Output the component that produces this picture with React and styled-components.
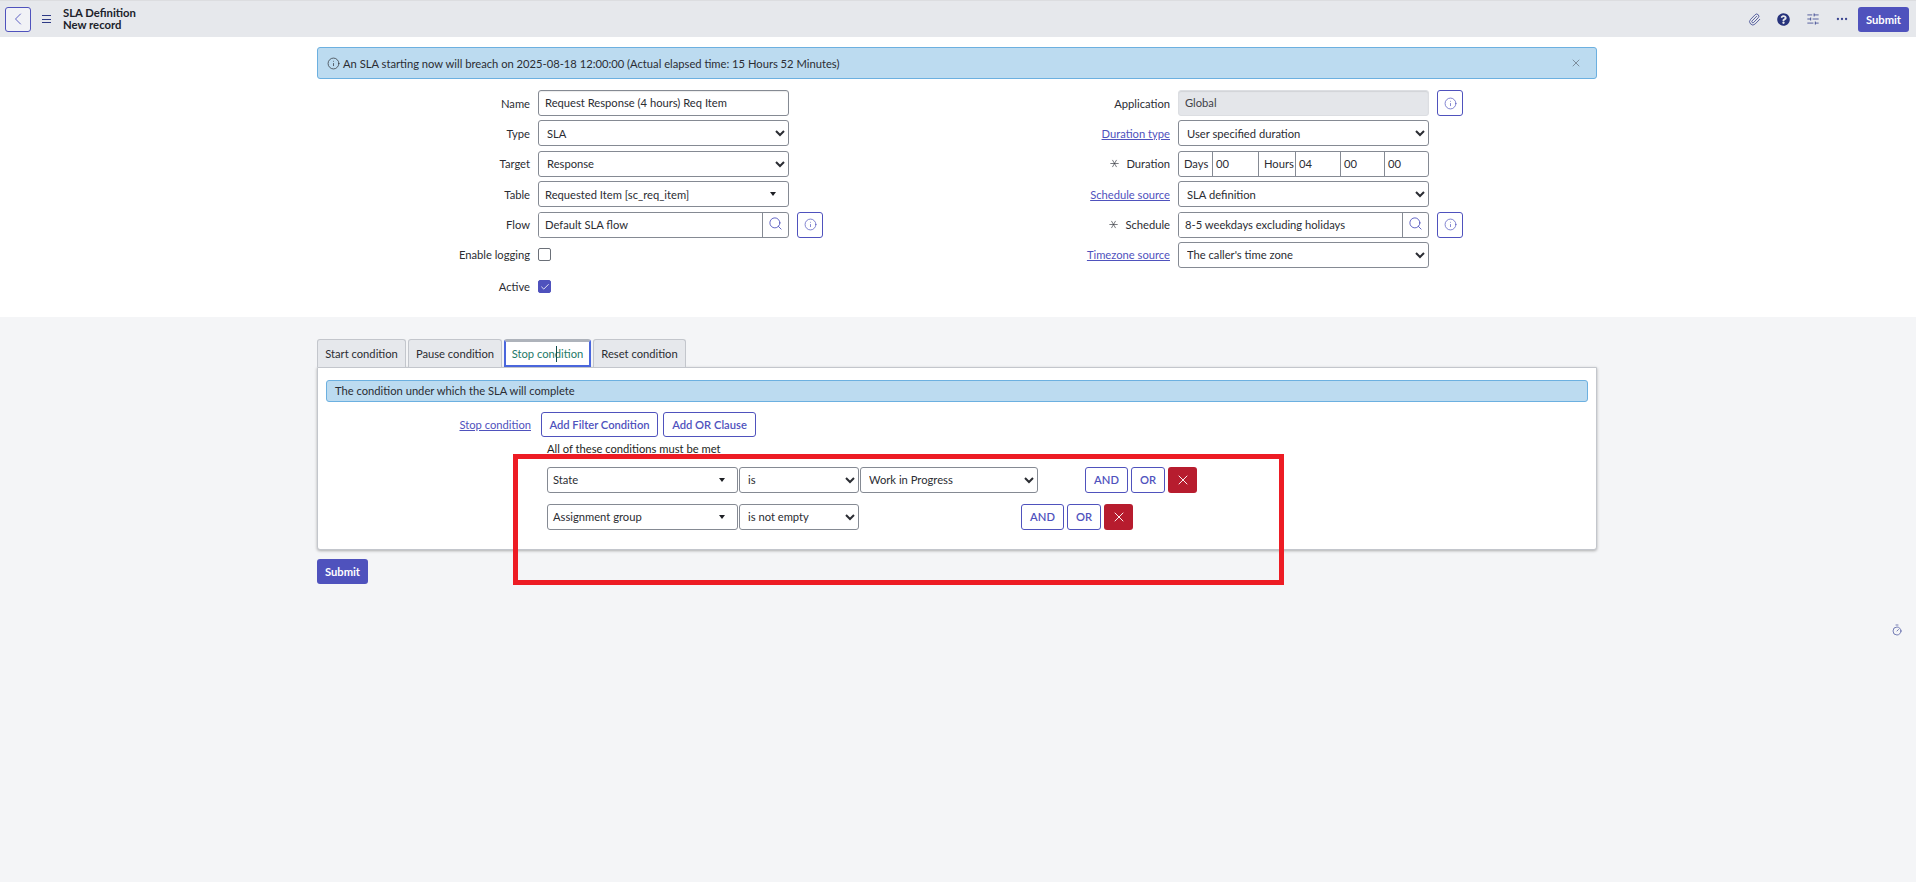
import React from 'react'
import styled, { createGlobalStyle } from 'styled-components'
import { ChevronLeft, Paperclip, SlidersHorizontal, Ellipsis, Info, Search, X, Check, Asterisk, Timer } from 'lucide-react'
import { FaQuestionCircle } from 'react-icons/fa'

const ACCENT = '#4f52bd'
const BORDER = '#858a93'
const TEXT = '#2b2d33'

const GlobalStyle = createGlobalStyle`
  html, body {
    margin: 0;
    background: #f4f5f7;
  }
  body {
    font-family: Lato, "Noto Sans", sans-serif;
    font-size: 11.2px;
    color: ${TEXT};
  }
  * {
    box-sizing: border-box;
  }
`

const Page = styled.div`
  position: relative;
  min-height: 882px;
`

const Header = styled.header`
  height: 37px;
  background: #e6e8ec;
  border-top: 1px solid #dcdde0;
  display: flex;
  align-items: center;
  padding: 0 7px 0 5px;
`

const BackButton = styled.button`
  width: 26px;
  height: 25px;
  padding: 0;
  background: #f1f2f6;
  border: 1px solid ${ACCENT};
  border-radius: 3px;
  color: ${ACCENT};
  display: flex;
  align-items: center;
  justify-content: center;
`

const Hamburger = styled.div`
  width: 9px;
  height: 8px;
  margin-left: 11px;
  border-top: 1px solid #2e3a86;
  border-bottom: 1px solid #2e3a86;
  display: flex;
  align-items: center;
  &::before {
    content: '';
    flex: 1;
    height: 1px;
    background: #2e3a86;
  }
`

const TitleBlock = styled.div`
  margin-left: 12px;
  font-size: 11.3px;
  line-height: 12px;
  font-weight: 700;
  color: #20222a;
`

const HeaderTools = styled.div`
  margin-left: auto;
  display: flex;
  align-items: center;
  color: #3a4590;
`

const ToolSlot = styled.span`
  width: 29px;
  display: flex;
  justify-content: center;
`

const SubmitButton = styled.button`
  width: 51px;
  height: 25px;
  padding: 0;
  margin-left: ${(p) => p.$gap || 0}px;
  margin-top: ${(p) => p.$top || 0}px;
  background: ${ACCENT};
  border: none;
  border-radius: 3px;
  color: #fff;
  font: 700 11.2px Lato, sans-serif;
`

const TopSection = styled.section`
  background: #fff;
  padding: 10px 319px 18.6px 317px;
`

const Alert = styled.div`
  height: 32px;
  background: #bcdbf0;
  border: 1px solid #6cb0e0;
  border-radius: 3px;
  display: flex;
  align-items: center;
  padding: 0 14px 0 9px;
  gap: 3px;
`

const AlertClose = styled.span`
  margin-left: auto;
  display: flex;
  color: #5b6470;
`

const FormGrid = styled.div`
  display: grid;
  grid-template-columns: 640px 640px;
  margin-top: 11px;
`

const FormColumn = styled.div`
  display: grid;
  grid-auto-rows: 26px;
  row-gap: 4.4px;
`

const FieldRow = styled.div`
  display: grid;
  grid-template-columns: 213px 251px 26px;
  column-gap: 8px;
  align-items: center;
  margin-top: ${(p) => p.$top || 0}px;
`

const FieldLabel = styled.label`
  text-align: right;
  display: flex;
  justify-content: flex-end;
  align-items: center;
  gap: 5px;
  color: ${TEXT};
`

const FieldLink = styled.a`
  color: ${ACCENT};
  text-decoration: underline;
`

const Mandatory = styled.span`
  display: flex;
  transform: rotate(90deg);
  color: #3a3d45;
  margin-right: -1px;
`

const TextInput = styled.input`
  width: 100%;
  height: 100%;
  padding: 0 6px 1px;
  font: 11.2px Lato, sans-serif;
  color: ${(p) => (p.disabled ? '#3f4248' : TEXT)};
  background: ${(p) => (p.disabled ? '#e4e6ea' : '#fff')};
  border: 1px solid ${(p) => (p.disabled ? '#dcdee2' : BORDER)};
  border-radius: 3px;
  box-shadow: inset 0 1px 1px rgba(0, 0, 0, 0.08);
  outline: none;
`

const NativeSelect = styled.select`
  width: ${(p) => (p.$width ? `${p.$width}px` : '100%')};
  height: ${(p) => (p.$width ? '26px' : '100%')};
  padding: 0 0 0 4px;
  font: 11.2px Lato, sans-serif;
  color: ${TEXT};
  background-color: #fff;
  border: 1px solid ${BORDER};
  border-radius: 3px;
  outline: none;
`

const ComboBox = styled.div`
  width: ${(p) => (p.$width ? `${p.$width}px` : '100%')};
  height: ${(p) => (p.$width ? '26px' : '100%')};
  padding: 0 12px 0 ${(p) => (p.$width ? 5 : 6)}px;
  background: #fff;
  border: 1px solid ${BORDER};
  border-radius: 3px;
  display: flex;
  align-items: center;
  justify-content: space-between;
`

const ComboCaret = styled.span`
  width: 0;
  height: 0;
  border-left: 3.5px solid transparent;
  border-right: 3.5px solid transparent;
  border-top: 4px solid #1d1f24;
`

const LookupGroup = styled.div`
  height: 100%;
  display: flex;
  border: 1px solid ${BORDER};
  border-radius: 3px;
  overflow: hidden;
  background: #fff;
  align-items: center;
`

const LookupInput = styled.input`
  flex: 1;
  min-width: 0;
  height: 100%;
  padding: 0 6px;
  border: none;
  border-right: 1px solid ${BORDER};
  font: 11.2px Lato, sans-serif;
  color: ${TEXT};
  outline: none;
`

const LookupIcon = styled.span`
  width: 25px;
  display: flex;
  justify-content: center;
  color: ${ACCENT};
  margin-top: -2px;
`

const IconButton = styled.button`
  width: 26px;
  height: 100%;
  padding: 0;
  background: #fff;
  border: 1px solid ${ACCENT};
  border-radius: 3px;
  color: ${ACCENT};
  display: flex;
  align-items: center;
  justify-content: center;
`

const Checkbox = styled.span`
  width: 13px;
  height: 13px;
  border-radius: 2px;
  border: 1px solid ${(p) => (p.$checked ? ACCENT : '#6b7078')};
  background: ${(p) => (p.$checked ? ACCENT : '#fff')};
  color: #fff;
  display: flex;
  align-items: center;
  justify-content: center;
`

const DurationGroup = styled.div`
  height: 100%;
  display: flex;
  border: 1px solid ${BORDER};
  border-radius: 3px;
  overflow: hidden;
  background: #fff;
`

const DurationCell = styled.div`
  width: ${(p) => p.$width}px;
  flex: none;
  display: flex;
  align-items: center;
  padding-left: ${(p) => (p.$unit ? 5 : 3)}px;
  border-right: 1px solid ${BORDER};
  &:last-child {
    border-right: none;
    flex: 1;
  }
`

const LowerSection = styled.section`
  padding: 22px 319px 0 317px;
`

const TabRow = styled.div`
  display: flex;
  gap: 2px;
  height: 28px;
`

const Tab = styled.div`
  position: relative;
  width: ${(p) => p.$width}px;
  display: flex;
  align-items: center;
  justify-content: center;
  border-radius: 3px 3px 0 0;
  background: ${(p) => (p.$active ? '#fff' : '#e6e8ec')};
  color: ${(p) => (p.$active ? '#1e7a68' : TEXT)};
  border: 1px solid #c3c6cc;
  border-bottom: none;
  ${(p) => p.$active && `
    border: 2px solid #4a66dc;
    border-top: 3px solid #aeb3bb;
  `}
`

const TextCaret = styled.span`
  position: absolute;
  left: 50px;
  top: 4px;
  width: 1px;
  height: 16px;
  background: #0f4c4c;
`

const Panel = styled.div`
  background: #fff;
  border: 1px solid #c3c6cc;
  border-radius: 0 0 3px 3px;
  box-shadow: 0 1px 3px rgba(0, 0, 0, 0.3);
  padding: 12px 8px 19px;
`

const Banner = styled.div`
  height: 22px;
  background: #bcdbf0;
  border: 1px solid #6cb0e0;
  border-radius: 3px;
  display: flex;
  align-items: center;
  padding-left: 8px;
`

const ClauseRow = styled.div`
  display: flex;
  align-items: center;
  margin-top: 10px;
  height: 25px;
`

const ClauseLabel = styled(FieldLink)`
  width: 205px;
  text-align: right;
  margin-right: 10px;
`

const OutlineButton = styled.button`
  height: ${(p) => (p.$small ? '26px' : '25px')};
  width: ${(p) => p.$width}px;
  margin-right: ${(p) => (p.$small ? 3 : 5)}px;
  padding: 0;
  background: #fff;
  border: 1px solid ${ACCENT};
  border-radius: 3px;
  color: ${ACCENT};
  font: 600 11.2px Lato, sans-serif;
`

const MetText = styled.div`
  margin: 5px 0 0 221px;
  line-height: 14px;
  color: #1d1f24;
`

const FilterRow = styled.div`
  display: flex;
  gap: 1px;
  margin: ${(p) => p.$top}px 0 0 221px;
`

const FilterActions = styled.div`
  display: flex;
  margin-left: ${(p) => p.$offset}px;
`

const DeleteButton = styled.button`
  width: 29px;
  height: 26px;
  padding: 0;
  background: #b71c2e;
  border: none;
  border-radius: 3px;
  color: #fff;
  display: flex;
  align-items: center;
  justify-content: center;
`

const Highlight = styled.div`
  position: absolute;
  left: 513px;
  top: 454px;
  width: 771px;
  height: 131px;
  border: 5px solid #ed1c24;
  pointer-events: none;
`

const TimerBadge = styled.span`
  position: absolute;
  left: 1891px;
  top: 624px;
  display: flex;
  color: #3f4a9a;
`

const noop = () => {}

const InfoButton = () => (
  <IconButton>
    <Info size={13} strokeWidth={1.3} />
  </IconButton>
)

const Lookup = ({ value }) => (
  <LookupGroup>
    <LookupInput value={value} onChange={noop} />
    <LookupIcon>
      <Search size={15} strokeWidth={1.4} />
    </LookupIcon>
  </LookupGroup>
)

const Select = ({ value, width }) => (
  <NativeSelect $width={width} value={value} onChange={noop}>
    <option>{value}</option>
  </NativeSelect>
)

const Required = () => (
  <Mandatory>
    <Asterisk size={15} strokeWidth={1.1} />
  </Mandatory>
)

const FilterButtons = ({ offset }) => (
  <FilterActions $offset={offset}>
    <OutlineButton $small $width={43}>AND</OutlineButton>
    <OutlineButton $small $width={34}>OR</OutlineButton>
    <DeleteButton>
      <X size={16} strokeWidth={1.4} />
    </DeleteButton>
  </FilterActions>
)

const App = () => {
  return (
    <Page>
      <GlobalStyle />
      <Header>
        <BackButton>
          <ChevronLeft size={20} strokeWidth={1.1} />
        </BackButton>
        <Hamburger />
        <TitleBlock>
          <div>SLA Definition</div>
          <div>New record</div>
        </TitleBlock>
        <HeaderTools>
          <ToolSlot><Paperclip size={13} strokeWidth={1.5} /></ToolSlot>
          <ToolSlot><FaQuestionCircle size={13} color="#27337c" /></ToolSlot>
          <ToolSlot><SlidersHorizontal size={14} strokeWidth={1.4} /></ToolSlot>
          <ToolSlot><Ellipsis size={14} strokeWidth={2} /></ToolSlot>
          <SubmitButton $gap={2}>Submit</SubmitButton>
        </HeaderTools>
      </Header>

      <TopSection>
        <Alert>
          <Info size={13} strokeWidth={1.3} />
          <span>An SLA starting now will breach on 2025-08-18 12:00:00 (Actual elapsed time: 15 Hours 52 Minutes)</span>
          <AlertClose><X size={12} strokeWidth={1.3} /></AlertClose>
        </Alert>
        <FormGrid>
          <FormColumn>
            <FieldRow>
              <FieldLabel>Name</FieldLabel>
              <TextInput value="Request Response (4 hours) Req Item" onChange={noop} />
            </FieldRow>
            <FieldRow>
              <FieldLabel>Type</FieldLabel>
              <Select value="SLA" />
            </FieldRow>
            <FieldRow>
              <FieldLabel>Target</FieldLabel>
              <Select value="Response" />
            </FieldRow>
            <FieldRow>
              <FieldLabel>Table</FieldLabel>
              <ComboBox>
                <span>Requested Item [sc_req_item]</span>
                <ComboCaret />
              </ComboBox>
            </FieldRow>
            <FieldRow>
              <FieldLabel>Flow</FieldLabel>
              <Lookup value="Default SLA flow" />
              <InfoButton />
            </FieldRow>
            <FieldRow>
              <FieldLabel>Enable logging</FieldLabel>
              <Checkbox />
            </FieldRow>
            <FieldRow $top={2.6}>
              <FieldLabel>Active</FieldLabel>
              <Checkbox $checked>
                <Check size={10} strokeWidth={2} />
              </Checkbox>
            </FieldRow>
          </FormColumn>

          <FormColumn>
            <FieldRow>
              <FieldLabel>Application</FieldLabel>
              <TextInput value="Global" disabled onChange={noop} />
              <InfoButton />
            </FieldRow>
            <FieldRow>
              <FieldLabel><FieldLink>Duration type</FieldLink></FieldLabel>
              <Select value="User specified duration" />
            </FieldRow>
            <FieldRow>
              <FieldLabel><Required />Duration</FieldLabel>
              <DurationGroup>
                <DurationCell $unit $width={34}>Days</DurationCell>
                <DurationCell $width={46}>00</DurationCell>
                <DurationCell $unit $width={37}>Hours</DurationCell>
                <DurationCell $width={45}>04</DurationCell>
                <DurationCell $width={44}>00</DurationCell>
                <DurationCell $width={44}>00</DurationCell>
              </DurationGroup>
            </FieldRow>
            <FieldRow>
              <FieldLabel><FieldLink>Schedule source</FieldLink></FieldLabel>
              <Select value="SLA definition" />
            </FieldRow>
            <FieldRow>
              <FieldLabel><Required />Schedule</FieldLabel>
              <Lookup value="8-5 weekdays excluding holidays" />
              <InfoButton />
            </FieldRow>
            <FieldRow>
              <FieldLabel><FieldLink>Timezone source</FieldLink></FieldLabel>
              <Select value="The caller's time zone" />
            </FieldRow>
          </FormColumn>
        </FormGrid>
      </TopSection>

      <LowerSection>
        <TabRow>
          <Tab $width={89}>Start condition</Tab>
          <Tab $width={94}>Pause condition</Tab>
          <Tab $width={87} $active>
            Stop condition
            <TextCaret />
          </Tab>
          <Tab $width={93}>Reset condition</Tab>
        </TabRow>
        <Panel>
          <Banner>The condition under which the SLA will complete</Banner>
          <ClauseRow>
            <ClauseLabel>Stop condition</ClauseLabel>
            <OutlineButton $width={117}>Add Filter Condition</OutlineButton>
            <OutlineButton $width={93}>Add OR Clause</OutlineButton>
          </ClauseRow>
          <MetText>All of these conditions must be met</MetText>
          <FilterRow $top={11}>
            <ComboBox $width={191}>
              <span>State</span>
              <ComboCaret />
            </ComboBox>
            <Select value="is" width={120} />
            <Select value="Work in Progress" width={178} />
            <FilterButtons offset={46} />
          </FilterRow>
          <FilterRow $top={11}>
            <ComboBox $width={191}>
              <span>Assignment group</span>
              <ComboCaret />
            </ComboBox>
            <Select value="is not empty" width={120} />
            <FilterButtons offset={161} />
          </FilterRow>
        </Panel>
        <SubmitButton $top={9}>Submit</SubmitButton>
      </LowerSection>

      <Highlight />
      <TimerBadge><Timer size={12} strokeWidth={1.4} /></TimerBadge>
    </Page>
  )
}

export default App
